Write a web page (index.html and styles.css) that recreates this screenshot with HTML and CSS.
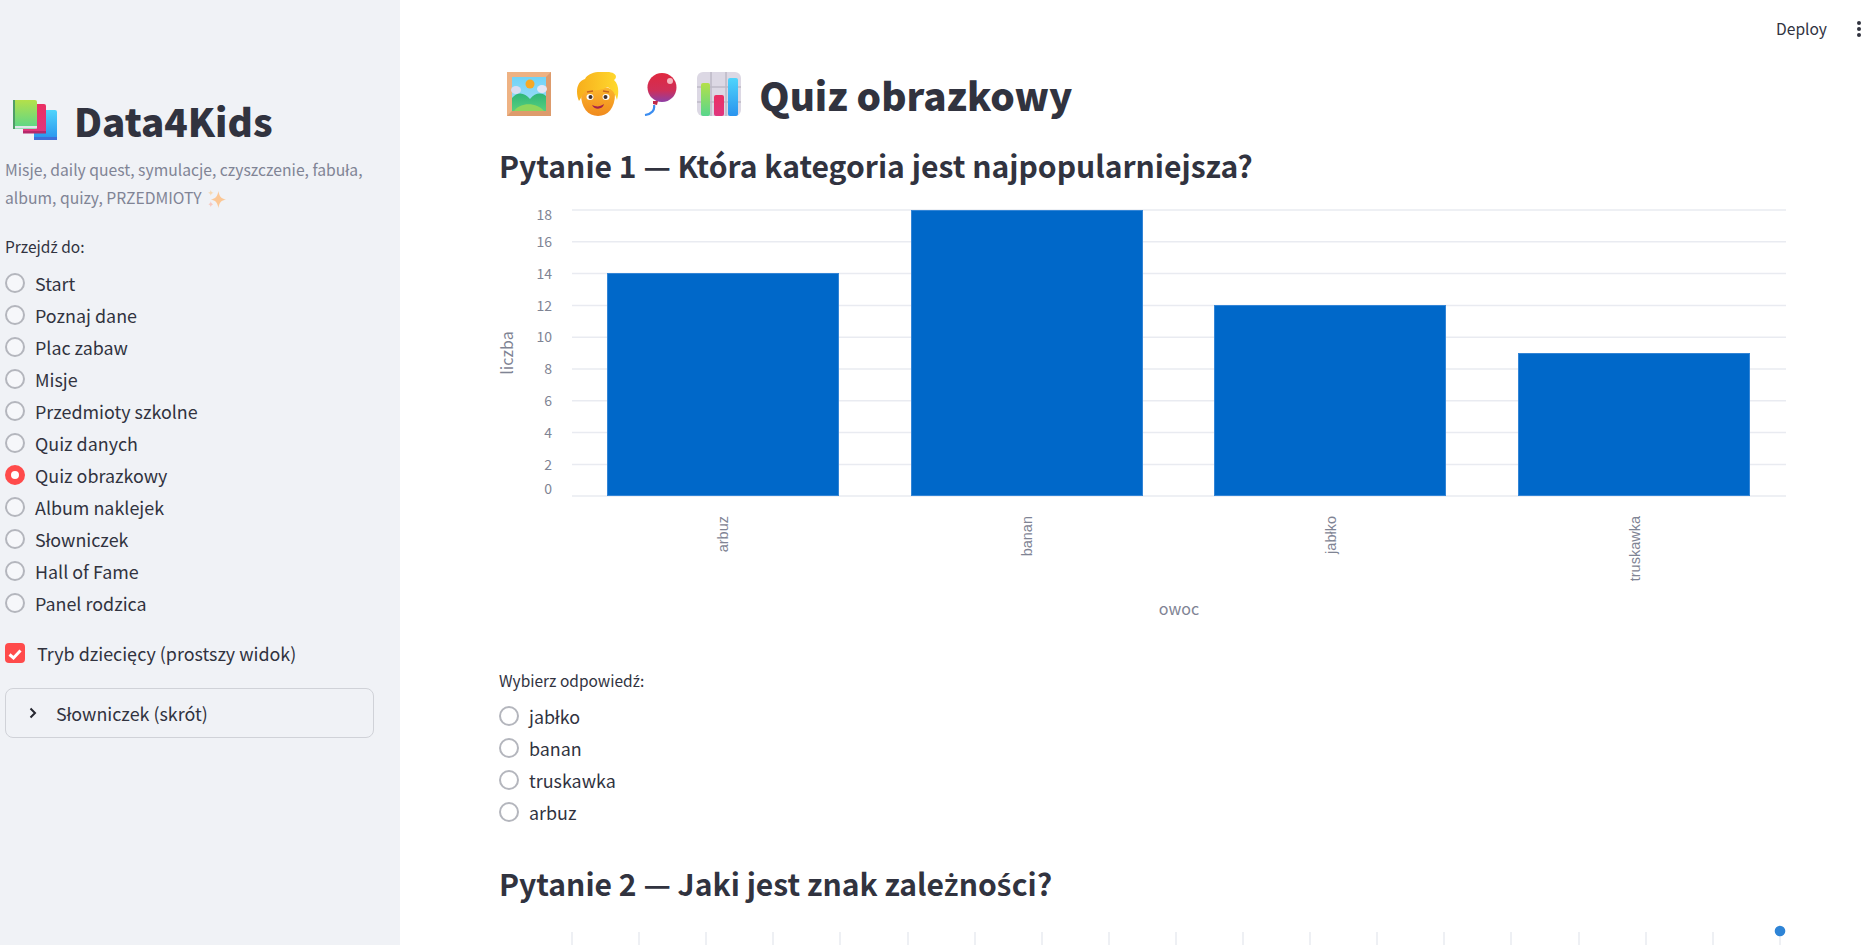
FILE: index.html
```html
<!DOCTYPE html>
<html lang="pl">
<head>
    <meta charset="UTF-8">
    <title>Quiz obrazkowy</title>
    <link rel="stylesheet" href="styles.css">
</head>
<body>
<svg class="defs" width="0" height="0">
    <defs>
        <linearGradient id="gGreen" x1="0" y1="0" x2="0" y2="1"><stop offset="0" stop-color="#b4e04a"/><stop offset="1" stop-color="#58d68c"/></linearGradient>
        <linearGradient id="gBlue" x1="0" y1="0" x2="0" y2="1"><stop offset="0" stop-color="#4fd4fb"/><stop offset="1" stop-color="#2a94ee"/></linearGradient>
        <linearGradient id="gPink" x1="0" y1="0" x2="0" y2="1"><stop offset="0" stop-color="#ea2f62"/><stop offset="1" stop-color="#e0367f"/></linearGradient>
        <linearGradient id="gSky" x1="0" y1="0" x2="0" y2="1"><stop offset="0" stop-color="#6fd3f7"/><stop offset="1" stop-color="#a9def5"/></linearGradient>
        <linearGradient id="gHill" x1="0" y1="0" x2="0" y2="1"><stop offset="0" stop-color="#2fb578"/><stop offset="1" stop-color="#58cf7e"/></linearGradient>
        <linearGradient id="gFace" x1="0" y1="0" x2="0" y2="1"><stop offset="0" stop-color="#fcb72c"/><stop offset="1" stop-color="#f08a1e"/></linearGradient>
        <linearGradient id="gHair" x1="0" y1="0" x2="1" y2="0"><stop offset="0" stop-color="#f7ae1c"/><stop offset="1" stop-color="#ffd92e"/></linearGradient>
        <linearGradient id="gBalloon" x1="0" y1="0" x2="0" y2="1"><stop offset="0" stop-color="#e0283f"/><stop offset="0.6" stop-color="#cf2f58"/><stop offset="1" stop-color="#8e3fa6"/></linearGradient>
    </defs>
</svg>
<div class="app">
    <aside class="sidebar">
        <h1 class="brand">
            <svg class="emoji-books" viewBox="0 0 44 40" width="44" height="40">
                <rect x="21" y="10" width="23" height="29" rx="2" fill="url(#gBlue)"/>
                <rect x="21" y="37" width="23" height="3" fill="#3f6fd8"/>
                <rect x="10" y="4" width="23" height="29" rx="2" fill="url(#gPink)"/>
                <rect x="10" y="31" width="23" height="2.500" fill="#b5286a"/>
                <rect x="0" y="0" width="24" height="29" rx="2" fill="url(#gGreen)"/>
                <rect x="0" y="26" width="24" height="2.500" fill="#dfe6ea"/>
                <rect x="0" y="0" width="2" height="29" fill="#4f9e68"/>
            </svg>
            <span>Data4Kids</span>
        </h1>
        <p class="tagline">Misje, daily quest, symulacje, czyszczenie, fabuła, album, quizy, PRZEDMIOTY
            <svg class="emoji-spark" viewBox="0 0 20 20" width="19" height="19">
                <path d="M12 2 C13 8 15 10 20 11 C15 12 13 14 12 20 C11 14 9 12 4 11 C9 10 11 8 12 2Z" fill="#fbc795"/>
                <path d="M4 1 C4.500 3 5 3.500 7 4 C5 4.500 4.500 5 4 7 C3.500 5 3 4.500 1 4 C3 3.500 3.500 3 4 1Z" fill="#f6d8b0"/>
                <path d="M4 13 C4.500 15 5 15.500 6.500 16 C5 16.500 4.500 17 4 19 C3.500 17 3 16.500 1.500 16 C3 15.500 3.500 15 4 13Z" fill="#f6c9c0"/>
            </svg>
        </p>
        <div class="small-label">Przejd<span class="dia">ź</span> do:</div>
        <ul class="radio-list">
            <li class="radio-row"><span class="radio"></span>Start</li>
            <li class="radio-row"><span class="radio"></span>Poznaj dane</li>
            <li class="radio-row"><span class="radio"></span>Plac zabaw</li>
            <li class="radio-row"><span class="radio"></span>Misje</li>
            <li class="radio-row"><span class="radio"></span>Przedmioty szkolne</li>
            <li class="radio-row"><span class="radio"></span>Quiz danych</li>
            <li class="radio-row"><span class="radio radio-on"></span>Quiz obrazkowy</li>
            <li class="radio-row"><span class="radio"></span>Album naklejek</li>
            <li class="radio-row"><span class="radio"></span>Słowniczek</li>
            <li class="radio-row"><span class="radio"></span>Hall of Fame</li>
            <li class="radio-row"><span class="radio"></span>Panel rodzica</li>
        </ul>
        <div class="check-row">
            <span class="checkbox">
                <svg viewBox="0 0 20 20" width="20" height="20"><path d="M4.500 10.500 L8.500 14 L15.500 6.500" fill="none" stroke="#fff" stroke-width="3"/></svg>
            </span>
            Tryb dziecięcy (prostszy widok)
        </div>
        <div class="expander">
            <svg viewBox="0 0 10 12" width="10" height="12"><path d="M2.500 1.500 L7 6 L2.500 10.500" fill="none" stroke="#262730" stroke-width="2"/></svg>
            Słowniczek (skrót)
        </div>
    </aside>

    <main class="main">
        <header class="topbar">
            <span class="deploy">Deploy</span>
            <span class="dots"><i></i><i></i><i></i></span>
        </header>

        <h1 class="page-title">
            <svg class="emoji" viewBox="0 0 63.330 44" width="63.330" height="44">
                <rect x="0" y="0" width="44" height="44" fill="#dd9b6c"/>
                <path d="M0 0 H44 L39 5 H5 V39 L0 44Z" fill="#eeb283"/>
                <rect x="5" y="5" width="34" height="34" fill="url(#gSky)"/>
                <circle cx="23" cy="12" r="4.500" fill="#f7a823"/>
                <ellipse cx="9" cy="18" rx="5" ry="4" fill="#d9dcf2"/>
                <ellipse cx="35" cy="17" rx="5" ry="4" fill="#e4e6f5"/>
                <path d="M5 26 C11 19 18 21 23 27 C28 21 34 20 39 24 V39 H5Z" fill="url(#gHill)"/>
                <path d="M7 39 C13 30 30 30 37 39Z" fill="#8fd65c"/>
            </svg>
            <svg class="emoji" viewBox="0 0 63.330 44" width="63.330" height="44">
                <path d="M11 22 C11 36 18 44 28 44 C38 44 45 36 45 22 C45 12 11 12 11 22Z" fill="url(#gFace)"/>
                <path d="M9 29 C5 20 7 9 15 7 C18 1 27 -1 37 0 C46 0 48 5 44 8 C49 12 49 21 47 28 C45 21 42 17 37 15 C31 19 21 19 16 18 C13 21 12 25 9 29Z" fill="url(#gHair)"/>
                <ellipse cx="20" cy="25" rx="3.500" ry="3" fill="#fff"/>
                <ellipse cx="36" cy="25" rx="3.500" ry="3" fill="#fff"/>
                <circle cx="20.500" cy="25" r="2" fill="#40302a"/>
                <circle cx="35.500" cy="25" r="2" fill="#40302a"/>
                <path d="M17 20 L23 19 M33 19 L39 20" stroke="#c9661f" stroke-width="1.500"/>
                <path d="M22 33 C26 35 30 35 34 32 C33 38 24 38 22 33Z" fill="#a5224a"/>
            </svg>
            <svg class="emoji" viewBox="0 0 63.330 44" width="63.330" height="44">
                <circle cx="28" cy="15.500" r="14.500" fill="url(#gBalloon)"/>
                <circle cx="36" cy="9" r="3" fill="#f5b8c0"/>
                <path d="M19 29 L24 29 L23 33 L19 32Z" fill="#c02a4a"/>
                <path d="M20 33 C21 38 18 42 11 43" fill="none" stroke="#3b8df0" stroke-width="2.200"/>
            </svg>
            <svg class="emoji" viewBox="0 0 63.330 44" width="63.330" height="44">
                <rect x="0" y="0" width="44" height="44" rx="6" fill="#dcd8e4"/>
                <path d="M14 0 V44 M29 0 V44 M0 15 H44 M0 30 H44" stroke="#bdb9c6" stroke-width="1.500"/>
                <rect x="4" y="11" width="9" height="33" rx="2" fill="url(#gGreen)"/>
                <rect x="17" y="23" width="10" height="21" rx="2" fill="url(#gPink)"/>
                <rect x="31" y="6" width="10" height="38" rx="2" fill="url(#gBlue)"/>
            </svg>
            <span class="page-title-text">Quiz obrazkowy</span>
        </h1>

        <h2 class="question">Pytanie 1 — Która kategoria jest najpopularniejsza?</h2>

        <svg class="chart" viewBox="479 189 1392 451" width="1392" height="451">
            <g class="grid">
                <line x1="572" x2="1786" y1="210" y2="210"/>
                <line x1="572" x2="1786" y1="241.800" y2="241.800"/>
                <line x1="572" x2="1786" y1="273.600" y2="273.600"/>
                <line x1="572" x2="1786" y1="305.400" y2="305.400"/>
                <line x1="572" x2="1786" y1="337.200" y2="337.200"/>
                <line x1="572" x2="1786" y1="369" y2="369"/>
                <line x1="572" x2="1786" y1="400.800" y2="400.800"/>
                <line x1="572" x2="1786" y1="432.600" y2="432.600"/>
                <line x1="572" x2="1786" y1="464.400" y2="464.400"/>
                <line x1="572" x2="1786" y1="496" y2="496"/>
            </g>
            <g class="bars">
                <rect x="607.500" y="273.500" width="231" height="222"/>
                <rect x="911.500" y="210.500" width="231" height="285"/>
                <rect x="1214.500" y="305.500" width="231" height="190"/>
                <rect x="1518.500" y="353.500" width="231" height="142"/>
            </g>
            <g class="y-ticks">
                <text x="552" y="220">18</text>
                <text x="552" y="247">16</text>
                <text x="552" y="279">14</text>
                <text x="552" y="311">12</text>
                <text x="552" y="342">10</text>
                <text x="552" y="374">8</text>
                <text x="552" y="406">6</text>
                <text x="552" y="438">4</text>
                <text x="552" y="470">2</text>
                <text x="552" y="494">0</text>
            </g>
            <g class="x-ticks">
                <text transform="translate(728 516) rotate(-90)">arbuz</text>
                <text transform="translate(1032 516) rotate(-90)">banan</text>
                <text transform="translate(1336 516) rotate(-90)">jabłko</text>
                <text transform="translate(1640 516) rotate(-90)">truskawka</text>
            </g>
            <text class="axis-title" transform="translate(513 353) rotate(-90)" text-anchor="middle">liczba</text>
            <text class="axis-title" x="1179" y="615" text-anchor="middle">owoc</text>
        </svg>

        <div class="small-label answer-label">Wybierz odpowied<span class="dia">ź</span>:</div>
        <ul class="radio-list">
            <li class="radio-row"><span class="radio"></span>jabłko</li>
            <li class="radio-row"><span class="radio"></span>banan</li>
            <li class="radio-row"><span class="radio"></span>truskawka</li>
            <li class="radio-row"><span class="radio"></span>arbuz</li>
        </ul>

        <h2 class="question question-two">Pytanie 2 — Jaki jest znak zale<span class="dia">ż</span>no<span class="dia">ś</span>ci?</h2>

        <svg class="chart-two" viewBox="479 0 1392 37" width="1392" height="37">
            <g class="grid">
                <line x1="572" x2="572" y1="24" y2="37"/>
                <line x1="639" x2="639" y1="24" y2="37"/>
                <line x1="706" x2="706" y1="24" y2="37"/>
                <line x1="773" x2="773" y1="24" y2="37"/>
                <line x1="840" x2="840" y1="24" y2="37"/>
                <line x1="908" x2="908" y1="24" y2="37"/>
                <line x1="975" x2="975" y1="24" y2="37"/>
                <line x1="1042" x2="1042" y1="24" y2="37"/>
                <line x1="1109" x2="1109" y1="24" y2="37"/>
                <line x1="1176" x2="1176" y1="24" y2="37"/>
                <line x1="1243" x2="1243" y1="24" y2="37"/>
                <line x1="1310" x2="1310" y1="24" y2="37"/>
                <line x1="1377" x2="1377" y1="24" y2="37"/>
                <line x1="1444" x2="1444" y1="24" y2="37"/>
                <line x1="1511" x2="1511" y1="24" y2="37"/>
                <line x1="1579" x2="1579" y1="24" y2="37"/>
                <line x1="1646" x2="1646" y1="24" y2="37"/>
                <line x1="1713" x2="1713" y1="24" y2="37"/>
                <line x1="1780" x2="1780" y1="24" y2="37"/>
            </g>
            <circle cx="1780" cy="23" r="5.300" fill="#2e84d6"/>
        </svg>
    </main>
</div>
</body>
</html>
```

FILE: styles.css
```css
html, body {
    margin: 0;
    height: 100%;
    overflow: hidden;
}
body {
    font-family: "Noto Sans CJK SC", "Noto Sans", sans-serif;
    color: #31333f;
    background-color: #fff;
}
.defs {
    position: absolute;
}
.dia {
    font-family: "Noto Sans", sans-serif;
}
.app {
    display: flex;
    height: 945px;
}
.sidebar {
    width: 395px;
    padding: 91px 0 0 5px;
    flex-shrink: 0;
    background-color: #f0f2f6;
}
.brand {
    display: flex;
    align-items: center;
    gap: 17px;
    margin: 0 0 7px 8px;
    font-size: 38.600px;
    line-height: 58px;
    font-weight: 900;
}
.tagline {
    margin: 0 0 24px;
    width: 375px;
    font-size: 15.700px;
    line-height: 28px;
    color: #808495;
}
.emoji-spark {
    vertical-align: -4px;
    margin-left: 2px;
}
.small-label {
    font-size: 15.500px;
    line-height: 20px;
    margin-bottom: 10px;
}
.radio-list {
    list-style: none;
    margin: 0;
    padding: 0;
}
.radio-row {
    display: flex;
    align-items: center;
    height: 32px;
    font-size: 17.900px;
    gap: 10px;
}
.radio {
    box-sizing: border-box;
    width: 20px;
    height: 20px;
    border: 2px solid #b4b6bd;
    border-radius: 50%;
    background-color: #fff;
}
.sidebar .radio {
    background-color: #f6f7fa;
}
.sidebar .radio-on {
    border: 6px solid #ff4b4b;
    background-color: #fff;
}
.check-row {
    display: flex;
    align-items: center;
    gap: 12px;
    margin-top: 18px;
    height: 32px;
    font-size: 17.900px;
}
.checkbox {
    width: 20px;
    height: 20px;
    border-radius: 4px;
    background-color: #ff4b4b;
}
.expander {
    display: flex;
    align-items: center;
    gap: 18px;
    box-sizing: border-box;
    width: 369px;
    height: 50px;
    margin-top: 19px;
    padding-left: 22px;
    border: 1px solid #d0d2d8;
    border-radius: 8px;
    font-size: 17.900px;
}
.main {
    flex: 1;
    padding-left: 99px;
    min-width: 0;
}
.topbar {
    display: flex;
    justify-content: flex-end;
    align-items: center;
    gap: 30px;
    height: 58px;
    padding-right: 10px;
}
.deploy {
    font-size: 15.600px;
    margin-bottom: 2px;
}
.dots {
    display: flex;
    flex-direction: column;
    gap: 2px;
}
.dots i {
    width: 4px;
    height: 4px;
    border-radius: 50%;
    background-color: #31333f;
}
.page-title {
    display: flex;
    align-items: center;
    margin: 9px 0 0 8px;
    height: 54px;
    font-size: 38.600px;
    font-weight: 900;
}
.emoji {
    flex-shrink: 0;
}
.page-title-text {
    margin-left: -1px;
}
.question {
    margin: 20px 0 0;
    font-size: 30.100px;
    line-height: 48px;
    font-weight: 600;
}
.chart {
    display: block;
    margin-left: -20px;
}
.grid line {
    stroke: #e9ebf1;
    stroke-width: 1.500;
}
.bars rect {
    fill: #0068c9;
    stroke: #3385d6;
    stroke-width: 1;
}
.y-ticks text {
    font-size: 14px;
    fill: #7f8494;
    text-anchor: end;
}
.x-ticks text {
    font-family: "Liberation Sans", sans-serif;
    font-size: 14.500px;
    fill: #7f8494;
    text-anchor: end;
}
.axis-title {
    font-size: 16px;
    fill: #7f8494;
}
.answer-label {
    margin-top: 30px;
    margin-bottom: 9px;
}
.question-two {
    margin-top: 31px;
}
.chart-two {
    display: block;
    margin-top: -1px;
    margin-left: -20px;
}
```
